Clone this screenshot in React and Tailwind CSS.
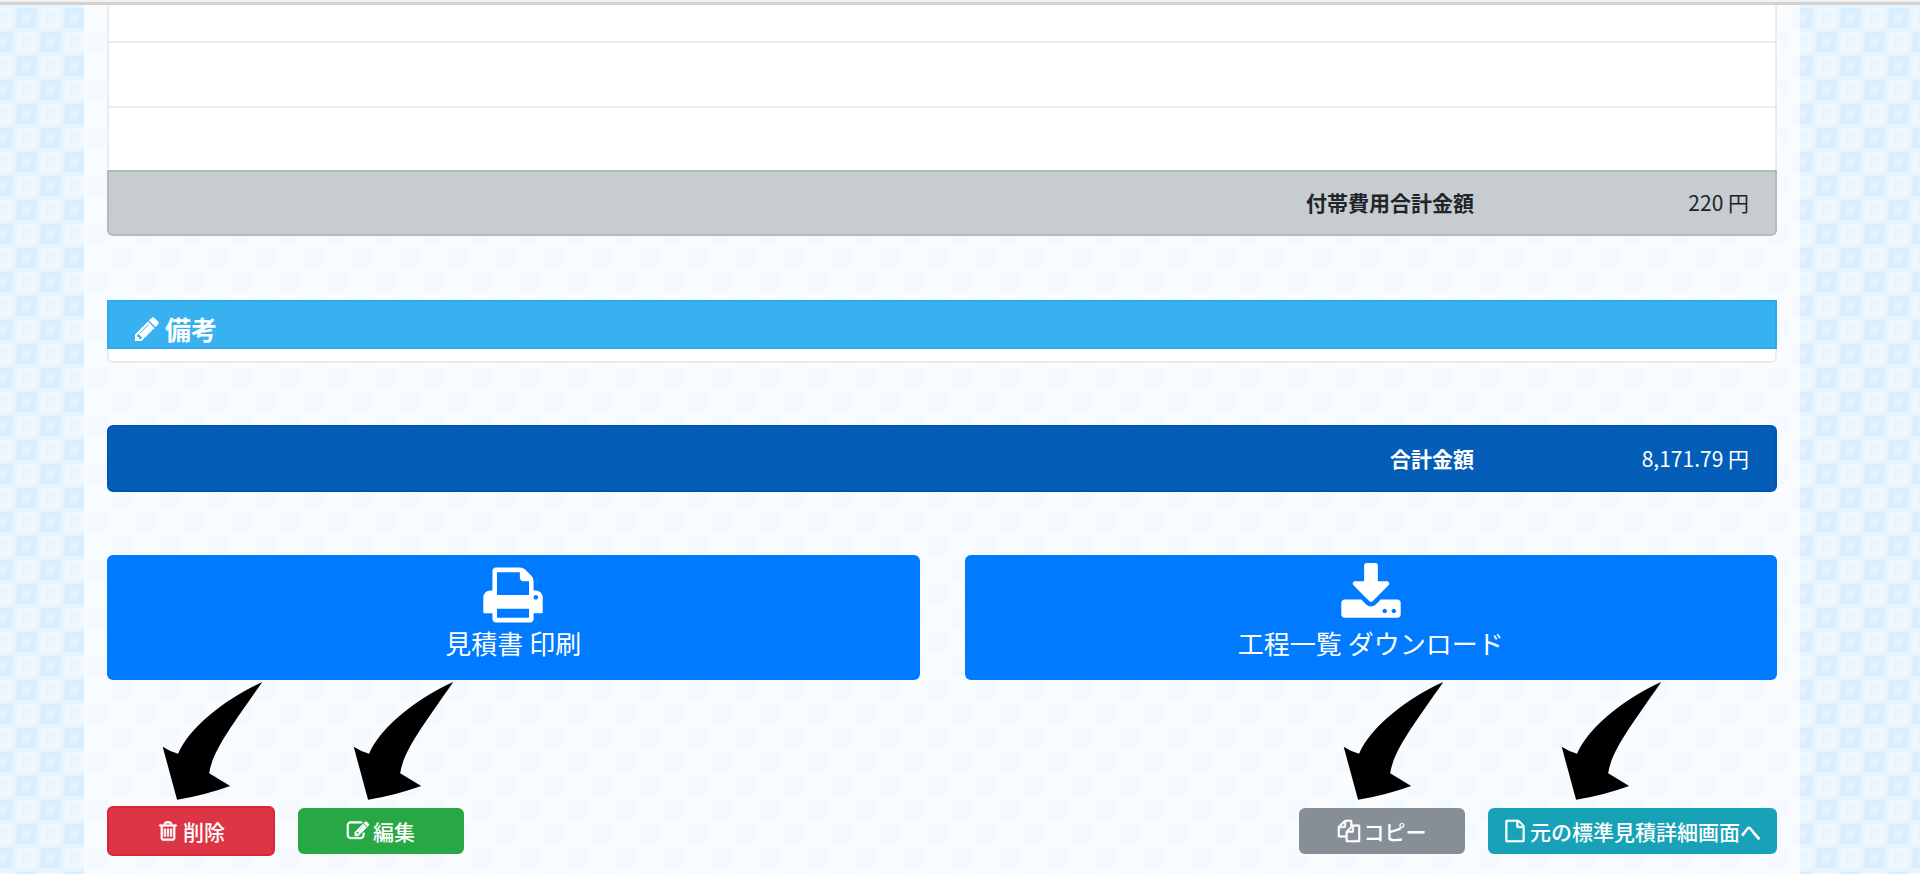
import clsx from "clsx";

const ICONS = {
  print:
    "M448 1536h896v-256h-896v256zm0-640h896v-384h-160q-40 0-68-28t-28-68v-160h-640v640zm1152 64q0-26-19-45t-45-19-45 19-19 45 19 45 45 19 45-19 19-45zm128 0v416q0 13-9.5 22.5t-22.5 9.5h-224v160q0 40-28 68t-68 28h-960q-40 0-68-28t-28-68v-160h-224q-13 0-22.5-9.5t-9.5-22.5v-416q0-79 56.5-135.5t135.5-56.5h64v-544q0-40 28-68t68-28h672q40 0 88 20t76 48l152 152q28 28 48 76t20 88v256h64q79 0 135.5 56.5t56.5 135.5z",
  download:
    "M1344 1344q0-26-19-45t-45-19-45 19-19 45 19 45 45 19 45-19 19-45zm256 0q0-26-19-45t-45-19-45 19-19 45 19 45 45 19 45-19 19-45zm128-224v320q0 40-28 68t-68 28h-1472q-40 0-68-28t-28-68v-320q0-40 28-68t68-28h465l135 136q58 56 136 56t136-56l136-136h464q40 0 68 28t28 68zm-325-569q17 41-14 70l-448 448q-18 19-45 19t-45-19l-448-448q-31-29-14-70 17-39 59-39h256v-448q0-26 19-45t45-19h256q26 0 45 19t19 45v448h256q42 0 59 39z",
  pencil:
    "M491 1536l91-91-235-235-91 91v107h128v128h107zm523-928q0-22-22-22-10 0-17 7l-542 542q-7 7-7 17 0 22 22 22 10 0 17-7l542-542q7-7 7-17zm-54-192l416 416-832 832h-416v-416zm683 96q0 53-37 90l-166 166-416-416 166-165q36-38 90-38 53 0 91 38l235 234q37 39 37 91z",
  trash:
    "M704 736v576q0 14-9 23t-23 9h-64q-14 0-23-9t-9-23v-576q0-14 9-23t23-9h64q14 0 23 9t9 23zm256 0v576q0 14-9 23t-23 9h-64q-14 0-23-9t-9-23v-576q0-14 9-23t23-9h64q14 0 23 9t9 23zm256 0v576q0 14-9 23t-23 9h-64q-14 0-23-9t-9-23v-576q0-14 9-23t23-9h64q14 0 23 9t9 23zm128 724v-948h-896v948q0 22 7 40.5t14.5 27 10.5 8.5h832q3 0 10.5-8.5t14.5-27 7-40.5zm-672-1076h448l-48-117q-7-9-17-11h-317q-10 2-17 11zm928 32v64q0 14-9 23t-23 9h-96v948q0 83-47 143.5t-113 60.5h-832q-66 0-113-58.5t-47-141.5v-952h-96q-14 0-23-9t-9-23v-64q0-14 9-23t23-9h309l70-167q15-37 54-63t79-26h320q40 0 79 26t54 63l70 167h309q14 0 23 9t9 23z",
  edit:
    "M888 1184l116-116-152-152-116 116v56h96v96h56zm440-720q-16-16-33 1l-350 350q-17 17-1 33t33-1l350-350q17-17 1-33zm80 594v190q0 119-84.5 203.5t-203.5 84.5h-832q-119 0-203.5-84.5t-84.5-203.5v-832q0-119 84.5-203.5t203.5-84.5h832q63 0 117 25 15 7 18 23 3 17-9 29l-49 49q-14 14-32 8-23-6-45-6h-832q-66 0-113 47t-47 113v832q0 66 47 113t113 47h832q66 0 113-47t47-113v-126q0-13 9-22l64-64q15-15 35-7t20 29zm-96-738l288 288-672 672h-288v-288zm444 132l-92 92-288-288 92-92q28-28 68-28t68 28l152 152q28 28 28 68t-28 68z",
  file:
    "M1596 380q28 28 48 76t20 88v1152q0 40-28 68t-68 28h-1344q-40 0-68-28t-28-68v-1600q0-40 28-68t68-28h896q40 0 88 20t76 48zm-444-244v376h376q-10-29-22-41l-313-313q-12-12-41-22zm384 1528v-1024h-416q-40 0-68-28t-28-68v-416h-768v1536h1280z",
  copy:
    "M1696 384q40 0 68 28t28 68v1216q0 40-28 68t-68 28h-960q-40 0-68-28t-28-68v-288h-544q-40 0-68-28t-28-68v-672q0-40 20-88t48-76l408-408q28-28 76-48t88-20h416q40 0 68 28t28 68v328q68-40 128-40h416zm-544 213l-299 299h299v-299zm-640-384l-299 299h299v-299zm196 647l316-316v-416h-384v416q0 40-28 68t-68 28h-416v640h512v-256q0-40 20-88t48-76zm956 804v-1152h-384v416q0 40-28 68t-68 28h-416v640h896z",
};

function Icon({ name, className }) {
  return (
    <svg
      viewBox="0 0 1792 1792"
      fill="currentColor"
      aria-hidden="true"
      className={clsx("shrink-0 overflow-visible", className)}
    >
      <path d={ICONS[name]} />
    </svg>
  );
}

// Checkered tile behind the whole page
function Backdrop() {
  return (
    <svg aria-hidden="true" className="absolute inset-0 h-full w-full">
      <defs>
        <pattern
          id="checks"
          width="48"
          height="48"
          x="15"
          y="7"
          patternUnits="userSpaceOnUse"
        >
          <rect width="48" height="48" fill="#e7f4fe" />
          <g fill="#d9edfe">
            <path d="M2 1h20l-1 20h-20z" />
            <path d="M26 25h20l-1 20h-20z" />
          </g>
          <g fill="#eff7ff">
            <path d="M26 1h20l-1 20h-20z" />
            <path d="M2 25h20l-1 20h-20z" />
          </g>
          <g fill="#e3f2fe">
            <path d="M8 6h9l-2 10h-9z" />
            <path d="M32 30h9l-2 10h-9z" />
          </g>
          <g fill="#e8f4fe">
            <path d="M32 6h9l-2 10h-9z" />
            <path d="M8 30h9l-2 10h-9z" />
          </g>
          <g fill="#f0f8ff">
            <path d="M34 9h5l-1 4h-5z" />
            <path d="M10 33h5l-1 4h-5z" />
          </g>
        </pattern>
      </defs>
      <rect width="100%" height="100%" fill="url(#checks)" />
    </svg>
  );
}

function Arrow({ className }) {
  return (
    <svg
      viewBox="217 62 302 356"
      aria-hidden="true"
      className={clsx(
        "pointer-events-none absolute bottom-full h-[119px] w-[101px]",
        className
      )}
    >
      <path d="M517 65C420 108 300 195 265 280Q242 274 219 259L262 417Q340 405 421 376L358 338C368 270 430 190 517 65Z" />
    </svg>
  );
}

function BigButton({ icon, children }) {
  return (
    <button className="flex flex-1 flex-col items-center rounded-md bg-[#007bff] pt-2 pb-[21px] text-[26px] leading-8 text-white">
      <Icon name={icon} className="size-16" />
      {children}
    </button>
  );
}

function ActionButton({ icon, className, arrow, children }) {
  return (
    <div className="relative">
      <Arrow className={arrow} />
      <button
        className={clsx(
          "flex items-center justify-center gap-1 rounded-md text-[21px] leading-6 font-medium text-white",
          className
        )}
      >
        <Icon name={icon} className="size-[22px] stroke-current stroke-[50]" />
        {children}
      </button>
    </div>
  );
}

export default function App() {
  return (
    <div className="relative min-h-screen font-['Noto_Sans_CJK_JP',sans-serif] text-[21px] text-[#212529]">
      <Backdrop />
      <div className="relative h-[5px] border-b-[3px] border-[#d0d2d3] bg-[#f5f1ef]"></div>

      <div className="relative pr-[120px] pl-[84px]">
        <main className="min-h-[calc(100vh-5px)] bg-white/70 px-[23px] pb-4">
          <table className="w-full border-separate border-spacing-0">
            <tbody>
              <tr>
                <td
                  colSpan={2}
                  className="h-[38px] border-x-2 border-b-2 border-[#ececec] bg-white"
                ></td>
              </tr>
              <tr>
                <td
                  colSpan={2}
                  className="h-[65px] border-x-2 border-b-2 border-[#ececec] bg-white"
                ></td>
              </tr>
              <tr>
                <td
                  colSpan={2}
                  className="h-[62px] border-x-2 border-[#ececec] bg-white"
                ></td>
              </tr>
            </tbody>
            <tfoot>
              <tr>
                <th className="h-[66px] rounded-bl-md border-y-2 border-l-2 border-[#b3babc] bg-[#c6cccf] pr-7 text-right font-bold">
                  付帯費用合計金額
                </th>
                <td className="w-[275px] rounded-br-md border-y-2 border-r-2 border-[#b3babc] bg-[#c6cccf] pr-[26px] text-right">
                  220 円
                </td>
              </tr>
            </tfoot>
          </table>

          <section className="mt-16">
            <h2 className="flex h-[49px] items-center gap-1 border-2 border-[#2aabef] bg-[#38b1f1] px-6 pt-2 text-[26px] font-bold text-white">
              <Icon name="pencil" className="size-7" />
              備考
            </h2>
            <div className="h-3.5 rounded-b-md border-x-2 border-b-2 border-[#ececec] bg-white"></div>
          </section>

          <dl className="mt-[62px] flex h-[67px] items-center justify-end rounded-md border-2 border-[#0056b0] bg-[#045eb7] text-white">
            <dt className="pr-7 font-bold">合計金額</dt>
            <dd className="w-[273px] pr-[26px] text-right">8,171.79 円</dd>
          </dl>

          <div className="mt-[63px] flex gap-[45px]">
            <BigButton icon="print">見積書 印刷</BigButton>
            <BigButton icon="download">工程一覧 ダウンロード</BigButton>
          </div>

          <div className="mt-[126px] flex items-center justify-between">
            <div className="flex items-center gap-[23px]">
              <ActionButton
                icon="trash"
                arrow="left-[55px] mb-1.5"
                className="h-[50px] w-[168px] border-2 border-[#dc2338] bg-[#dc3545]"
              >
                削除
              </ActionButton>
              <ActionButton
                icon="edit"
                arrow="left-[55px] mb-2"
                className="h-[46px] w-[166px] bg-[#28a745]"
              >
                編集
              </ActionButton>
            </div>
            <div className="flex items-center gap-[23px]">
              <ActionButton
                icon="copy"
                arrow="left-11 mb-2"
                className="h-[46px] w-[166px] bg-[#868e96]"
              >
                コピー
              </ActionButton>
              <ActionButton
                icon="file"
                arrow="left-[73px] mb-2"
                className="h-[46px] w-[289px] bg-[#17a2b8]"
              >
                元の標準見積詳細画面へ
              </ActionButton>
            </div>
          </div>
        </main>
      </div>
    </div>
  );
}
